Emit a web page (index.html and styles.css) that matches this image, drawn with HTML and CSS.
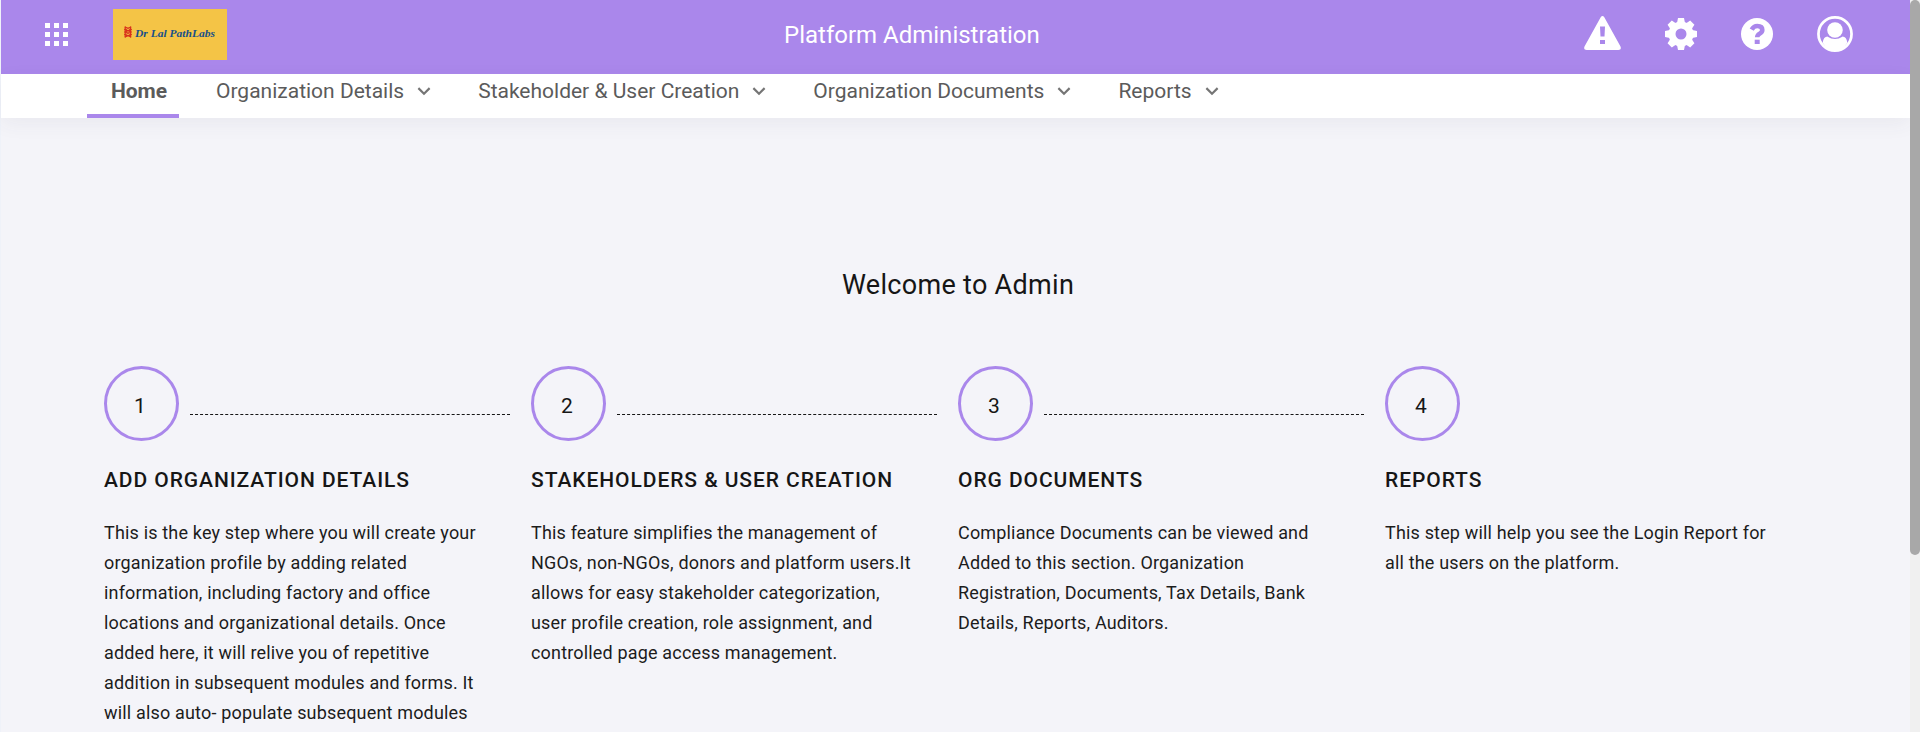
FILE: index.html
```html
<!DOCTYPE html>
<html lang="en">
<head>
<meta charset="utf-8">
<title>Platform Administration</title>
<link rel="stylesheet" href="styles.css">
</head>
<body>
<div class="page">
  <header class="topbar">
    <div class="brand">
      <svg class="apps" width="23" height="23" viewBox="0 0 23 23" fill="#fff" shape-rendering="crispEdges"><path d="M0 0h5v5H0zM9 0h5v5H9zM18 0h5v5h-5zM0 9h5v5H0zM9 9h5v5H9zM18 9h5v5h-5zM0 18h5v5H0zM9 18h5v5H9zM18 18h5v5h-5z"/></svg>
      <div class="logo">
        <svg width="8" height="12" viewBox="0 0 8 12" fill="none" stroke="#d8321c" stroke-width="1.3"><path d="M1.200 .5v11M6.600 .5v11"/><path d="M1 1l6 2.500-6 2.500 6 2.500-6 2.500M7 1l-6 2.500 6 2.500-6 2.500 6 2.500" stroke-width="1.200"/></svg>
        <svg width="82" height="16" viewBox="0 0 82 16"><text class="logo-text" x="0" y="10.500" textLength="80" lengthAdjust="spacingAndGlyphs">Dr Lal PathLabs</text></svg>
      </div>
    </div>
    <h1 class="title">Platform Administration</h1>
    <div class="actions">
      <svg width="37" height="34" viewBox="0 0 37 34"><path fill="#fff" fill-rule="evenodd" d="M16.700 1.300Q18.500-1.200 20.300 1.300L36.500 30.500Q37.800 34 34.400 34H2.600Q-.8 34 .5 30.500ZM16 10.500l.5 10h4l.5-10zM16 24v4h5v-4z"/></svg>
      <svg width="32" height="32" viewBox="0 0 32 32"><g fill="#fff"><circle cx="16" cy="16" r="9" fill="none" stroke="#fff" stroke-width="7"/><path d="M13 0h6l1.200 6h-8.400zM13 32h6l1.200-6h-8.400zM0 13v6l6 1.200v-8.400zM32 13v6l-6 1.200v-8.400z"/><path d="M13 0h6l1.200 6h-8.400zM13 32h6l1.200-6h-8.400zM0 13v6l6 1.200v-8.400zM32 13v6l-6 1.200v-8.400z" transform="rotate(45 16 16)"/></g></svg>
      <svg width="32" height="32" viewBox="0 0 32 32"><circle cx="16" cy="16" r="16" fill="#fff"/><path d="M10.700 11.700Q12.700 8 16.300 8Q21.300 8 21.300 12Q21.300 14.300 18.600 15.700Q16.200 17 16.200 19.300" fill="none" stroke="#aa87eb" stroke-width="4.600"/><path d="M13.700 21.700h5v4.300h-5z" fill="#aa87eb"/></svg>
      <svg width="36" height="36" viewBox="0 0 37 37"><circle cx="18.500" cy="18.500" r="17" fill="none" stroke="#fff" stroke-width="2.800"/><circle cx="18.500" cy="14.300" r="8" fill="#fff"/><path fill="#fff" d="M5.800 27.500Q6.800 21 11 21.200Q14.500 23.600 18.500 23.600T26 21.200Q30.200 21 31.200 27.500Q26.500 35.500 18.500 35.500T5.800 27.500Z"/></svg>
    </div>
  </header>
  <nav class="menu">
    <a class="item active">Home</a>
    <a class="item">Organization Details<svg class="chev" viewBox="0 0 12 8"><path d="M1 1l5 5 5-5"/></svg></a>
    <a class="item">Stakeholder &amp; User Creation<svg class="chev" viewBox="0 0 12 8"><path d="M1 1l5 5 5-5"/></svg></a>
    <a class="item">Organization Documents<svg class="chev" viewBox="0 0 12 8"><path d="M1 1l5 5 5-5"/></svg></a>
    <a class="item">Reports<svg class="chev" viewBox="0 0 12 8"><path d="M1 1l5 5 5-5"/></svg></a>
  </nav>
  <main class="content">
    <h2 class="welcome">Welcome to Admin</h2>
    <div class="steps">
      <section class="step">
        <div class="marker"><span class="num">1</span><span class="line"></span></div>
        <h3>ADD ORGANIZATION DETAILS</h3>
        <p>This is the key step where you will create your<br>organization profile by adding related<br>information, including factory and office<br>locations and organizational details. Once<br>added here, it will relive you of repetitive<br>addition in subsequent modules and forms. It<br>will also auto- populate subsequent modules</p>
      </section>
      <section class="step">
        <div class="marker"><span class="num">2</span><span class="line"></span></div>
        <h3>STAKEHOLDERS &amp; USER CREATION</h3>
        <p>This feature simplifies the management of<br>NGOs, non-NGOs, donors and platform users.It<br>allows for easy stakeholder categorization,<br>user profile creation, role assignment, and<br>controlled page access management.</p>
      </section>
      <section class="step">
        <div class="marker"><span class="num">3</span><span class="line"></span></div>
        <h3>ORG DOCUMENTS</h3>
        <p>Compliance Documents can be viewed and<br>Added to this section. Organization<br>Registration, Documents, Tax Details, Bank<br>Details, Reports, Auditors.</p>
      </section>
      <section class="step">
        <div class="marker"><span class="num">4</span></div>
        <h3>REPORTS</h3>
        <p>This step will help you see the Login Report for<br>all the users on the platform.</p>
      </section>
    </div>
  </main>
</div>
<div class="scrollbar"><div class="thumb"></div></div>
</body>
</html>
```
FILE: styles.css
```css
* { box-sizing: border-box; }
body {
  margin: 0;
  height: 732px;
  overflow: hidden;
  display: flex;
  background: #f4f4f9;
  color: #161616;
  font-family: Roboto, "Liberation Sans", sans-serif;
}
h1, h2, h3, p { margin: 0; }
.page { width: 1910px; border-left: 1px solid #eff2f9; }
.topbar {
  height: 74px;
  background: #aa87eb;
  display: grid;
  grid-template-columns: 783px 1fr auto;
}
.brand { display: flex; align-items: flex-start; padding-left: 44px; gap: 45px; }
.apps { margin-top: 23px; }
.logo {
  width: 114px;
  height: 51px;
  margin-top: 9px;
  padding: 17px 0 0 11px;
  background: #f4c446;
  display: flex;
  gap: 3px;
}
.logo svg { flex: none; }
.logo-text { font: italic bold 11px "Liberation Serif", serif; fill: #17508a; }
.title {
  font-size: 24px;
  line-height: 28px;
  font-weight: 400;
  color: #fff;
  padding-top: 21px;
  white-space: nowrap;
}
.actions { display: flex; align-items: flex-start; gap: 44px; padding: 16px 57px 0 0; }
.actions svg { display: block; }
.actions svg:nth-child(2),
.actions svg:nth-child(3) { margin-top: 2px; }
.menu {
  height: 44px;
  background: #fff;
  display: flex;
  padding-left: 86px;
  gap: 47px;
  color: #5b5b5b;
  font-size: 21px;
  line-height: 34px;
  white-space: nowrap;
  box-shadow: 0 6px 20px rgba(60, 60, 90, .06);
}
.item { display: flex; }
.active {
  width: 92px;
  padding-left: 12px;
  justify-content: center;
  margin-right: -10px;
  font-weight: 700;
  border-bottom: 4px solid #aa87eb;
}
.chev {
  width: 14px;
  height: 9px;
  margin: 13px 0 0 13px;
  fill: none;
  stroke: #757575;
  stroke-width: 1.9;
}
.content { padding: 150px 0 0 103px; }
.welcome {
  margin-left: -103px;
  padding-left: 841px;
  font-size: 27px;
  line-height: 34px;
  font-weight: 400;
  letter-spacing: .3px;
}
.steps { display: grid; grid-template-columns: repeat(4, 427px); margin-top: 64px; }
.marker { display: flex; gap: 11px; }
.num {
  width: 75px;
  height: 75px;
  border: 3px solid #aa87eb;
  border-radius: 50%;
  font-size: 21px;
  line-height: 75px;
  padding-right: 3px;
  text-align: center;
}
.line { width: 320px; height: 49px; border-bottom: 1px dashed #161616; }
h3 {
  margin-top: 24px;
  font-size: 21px;
  line-height: 30px;
  font-weight: 500;
  letter-spacing: .93px;
  white-space: nowrap;
}
p {
  margin-top: 23px;
  font-size: 18px;
  line-height: 30px;
  letter-spacing: .17px;
  color: #1c1c1c;
  white-space: nowrap;
}
.scrollbar { width: 10px; height: 732px; background: #f0f0f0; }
.thumb { height: 555px; border-radius: 5px; background: #a8a8a8; }
```
